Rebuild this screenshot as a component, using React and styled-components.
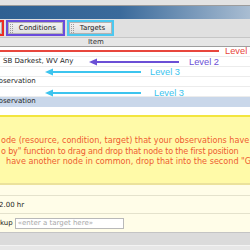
import React from "react";
import styled, { createGlobalStyle } from "styled-components";

const GlobalStyle = createGlobalStyle`
  html, body { margin: 0; padding: 0; background: #fff; }
  body { width: 250px; height: 250px; overflow: hidden; }
`;

const Page = styled.div`
  position: relative;
  width: 250px;
  height: 250px;
  overflow: hidden;
  display: flex;
  flex-direction: column;
  font-family: "DejaVu Sans", "Noto Sans", sans-serif;
  font-size: 7px;
  color: #1e1e1e;
  background: #fff;
`;

const TopStrip = styled.div`
  height: 5px;
  flex-shrink: 0;
  background: #e3e3e3;
  border-bottom: 1px solid #9c9c9c;
`;

const TitleBar = styled.div`
  height: 13px;
  flex-shrink: 0;
  background: linear-gradient(to right, #2f6092 0%, #3a6a9b 48%, #a9bdd2 100%);
`;

const Toolbar = styled.div`
  height: 18px;
  flex-shrink: 0;
  display: flex;
  align-items: center;
  background: #e0e0e0;
`;

const GroupRow = styled.div`
  display: flex;
  align-items: center;
  gap: 2px;
  margin-left: -54px;
`;

const Frame = styled.div`
  display: flex;
  flex-shrink: 0;
  border: 2px solid ${(p) => p.$color};
`;

const ToolButton = styled.div`
  display: flex;
  align-items: center;
  gap: 6px;
  height: 10px;
  padding: 0 6px 0 1px;
  border: 1px solid #b2b2b2;
  background: linear-gradient(#f1f1f1, #e1e1e1);
  line-height: 10px;
  white-space: nowrap;
  color: #222;
`;

const Grip = () => (
  <svg width="3" height="9" viewBox="0 0 3 9" style={{ display: "block" }}>
    {[0, 2, 4, 6, 8].map((y) => (
      <g key={y} fill="#9c9c9c">
        <rect x="0" y={y} width="1" height="1" />
        <rect x="2" y={y} width="1" height="1" />
      </g>
    ))}
  </svg>
);

const HeaderRow = styled.div`
  height: 8px;
  flex-shrink: 0;
  line-height: 8px;
  padding-left: 88px;
  background: #e6e6e6;
  border-top: 1px solid #c6c6c6;
  border-bottom: 1px solid #9f9f9f;
  color: #333;
`;

const Row = styled.div`
  height: 9px;
  flex-shrink: 0;
  line-height: 9px;
  white-space: nowrap;
  text-indent: ${(p) => p.$indent || 0}px;
  background: ${(p) => (p.$selected ? "#c9d7ea" : "#fff")};
  border-bottom: 1px solid ${(p) => (p.$selected ? "#c9d7ea" : "#ececec")};
`;

const Spacer = styled.div`
  height: 8px;
  flex-shrink: 0;
`;

const Notice = styled.div`
  flex-shrink: 0;
  padding: 18px 0 16.5px;
  background: #fffaa8;
  border-top: 2px solid #f3e53e;
  border-bottom: 2px solid #ebe29c;
  color: #ee5c31;
  font-size: 8.1px;
  line-height: 10.5px;
`;

const NoticeLine = styled.div`
  white-space: nowrap;
  padding-left: ${(p) => p.$indent || 0}px;
  letter-spacing: ${(p) => p.$spacing || 0}px;
`;

const Panel = styled.div`
  flex-shrink: 0;
  display: flex;
  flex-direction: column;
  background: #fffde8;
  border-bottom: 1px solid #c4c4c4;
`;

const PanelRow = styled.div`
  height: ${(p) => p.$h}px;
  display: flex;
  align-items: center;
  gap: 2px;
  white-space: nowrap;
  border-bottom: ${(p) => (p.$last ? "none" : "1px solid #e4e2cc")};
  text-indent: ${(p) => p.$indent || 0}px;
`;

const TargetInput = styled.div`
  width: 105px;
  height: 9px;
  line-height: 9px;
  padding-left: 2px;
  border: 1px solid #b9b9b9;
  background: #fff;
  color: #a9a9a9;
  text-indent: 0;
`;

const StatusBar = styled.div`
  height: 12px;
  flex-shrink: 0;
  background: #dbdbdb;
  border-bottom: 1px solid #f3f3f3;
`;

const Footer = styled.div`
  flex: 1;
  background: #e7e7e7;
`;

const Mark = styled.div`
  position: absolute;
  left: ${(p) => p.$x}px;
  top: ${(p) => p.$y - 4}px;
  height: 8px;
  display: flex;
  align-items: center;
  gap: ${(p) => p.$gap}px;
  color: ${(p) => p.$color};
  font-family: "Liberation Sans", Arial, sans-serif;
  font-size: 9.3px;
  line-height: 10px;
  white-space: nowrap;
`;

const Annotation = ({ x, y, len, color, head, gap, label }) => (
  <Mark $x={x} $y={y} $gap={gap} $color={color}>
    <svg width={len} height="8" viewBox={`0 0 ${len} 8`} style={{ display: "block", flexShrink: 0 }}>
      {head && <polygon points="0,4 8,0.6 8,7.4" fill={color} />}
      <rect x={head ? 7 : 0} y="3" width={head ? len - 7 : len} height="2" fill={color} />
    </svg>
    <span>{label}</span>
  </Mark>
);

export default function App() {
  return (
    <>
      <GlobalStyle />
      <Page>
        <TopStrip />
        <TitleBar />
        <Toolbar>
          <GroupRow>
            <Frame $color="#ec2b25">
              <ToolButton>
                <Grip />
                Resources
              </ToolButton>
            </Frame>
            <Frame $color="#6a4bdc">
              <ToolButton>
                <Grip />
                Conditions
              </ToolButton>
            </Frame>
            <Frame $color="#4cc8f0">
              <ToolButton>
                <Grip />
                Targets
              </ToolButton>
            </Frame>
          </GroupRow>
        </Toolbar>
        <HeaderRow>Item</HeaderRow>
        <Row />
        <Row $indent={3}>SB Darkest, WV Any</Row>
        <Row />
        <Row $indent={-7}>Observation</Row>
        <Row />
        <Row $indent={-7} $selected>
          Observation
        </Row>
        <Spacer />
        <Notice>
          <NoticeLine $indent={1}>
            ode (resource, condition, target) that your observations have in common
          </NoticeLine>
          <NoticeLine $indent={1} $spacing={-0.18}>
            o by" function to drag and drop that node to the first position
          </NoticeLine>
          <NoticeLine $indent={6}>
            have another node in common, drop that into the second "Group by" field.
          </NoticeLine>
        </Notice>
        <Panel>
          <PanelRow $h={10} />
          <PanelRow $h={17} $indent={-1}>
            2.00 hr
          </PanelRow>
          <PanelRow $h={18} $last>
            <span>kup</span>
            <TargetInput>«enter a target here»</TargetInput>
          </PanelRow>
        </Panel>
        <StatusBar />
        <Footer />
        <Annotation x={0} y={51} len={219} color="#e8463c" gap={6} label="Level 1" />
        <Annotation x={89} y={62} len={90} color="#6b4fd6" head gap={10} label="Level 2" />
        <Annotation x={45} y={72} len={96} color="#3cc4ee" head gap={9} label="Level 3" />
        <Annotation x={45} y={93} len={96} color="#3cc4ee" head gap={13} label="Level 3" />
      </Page>
    </>
  );
}
